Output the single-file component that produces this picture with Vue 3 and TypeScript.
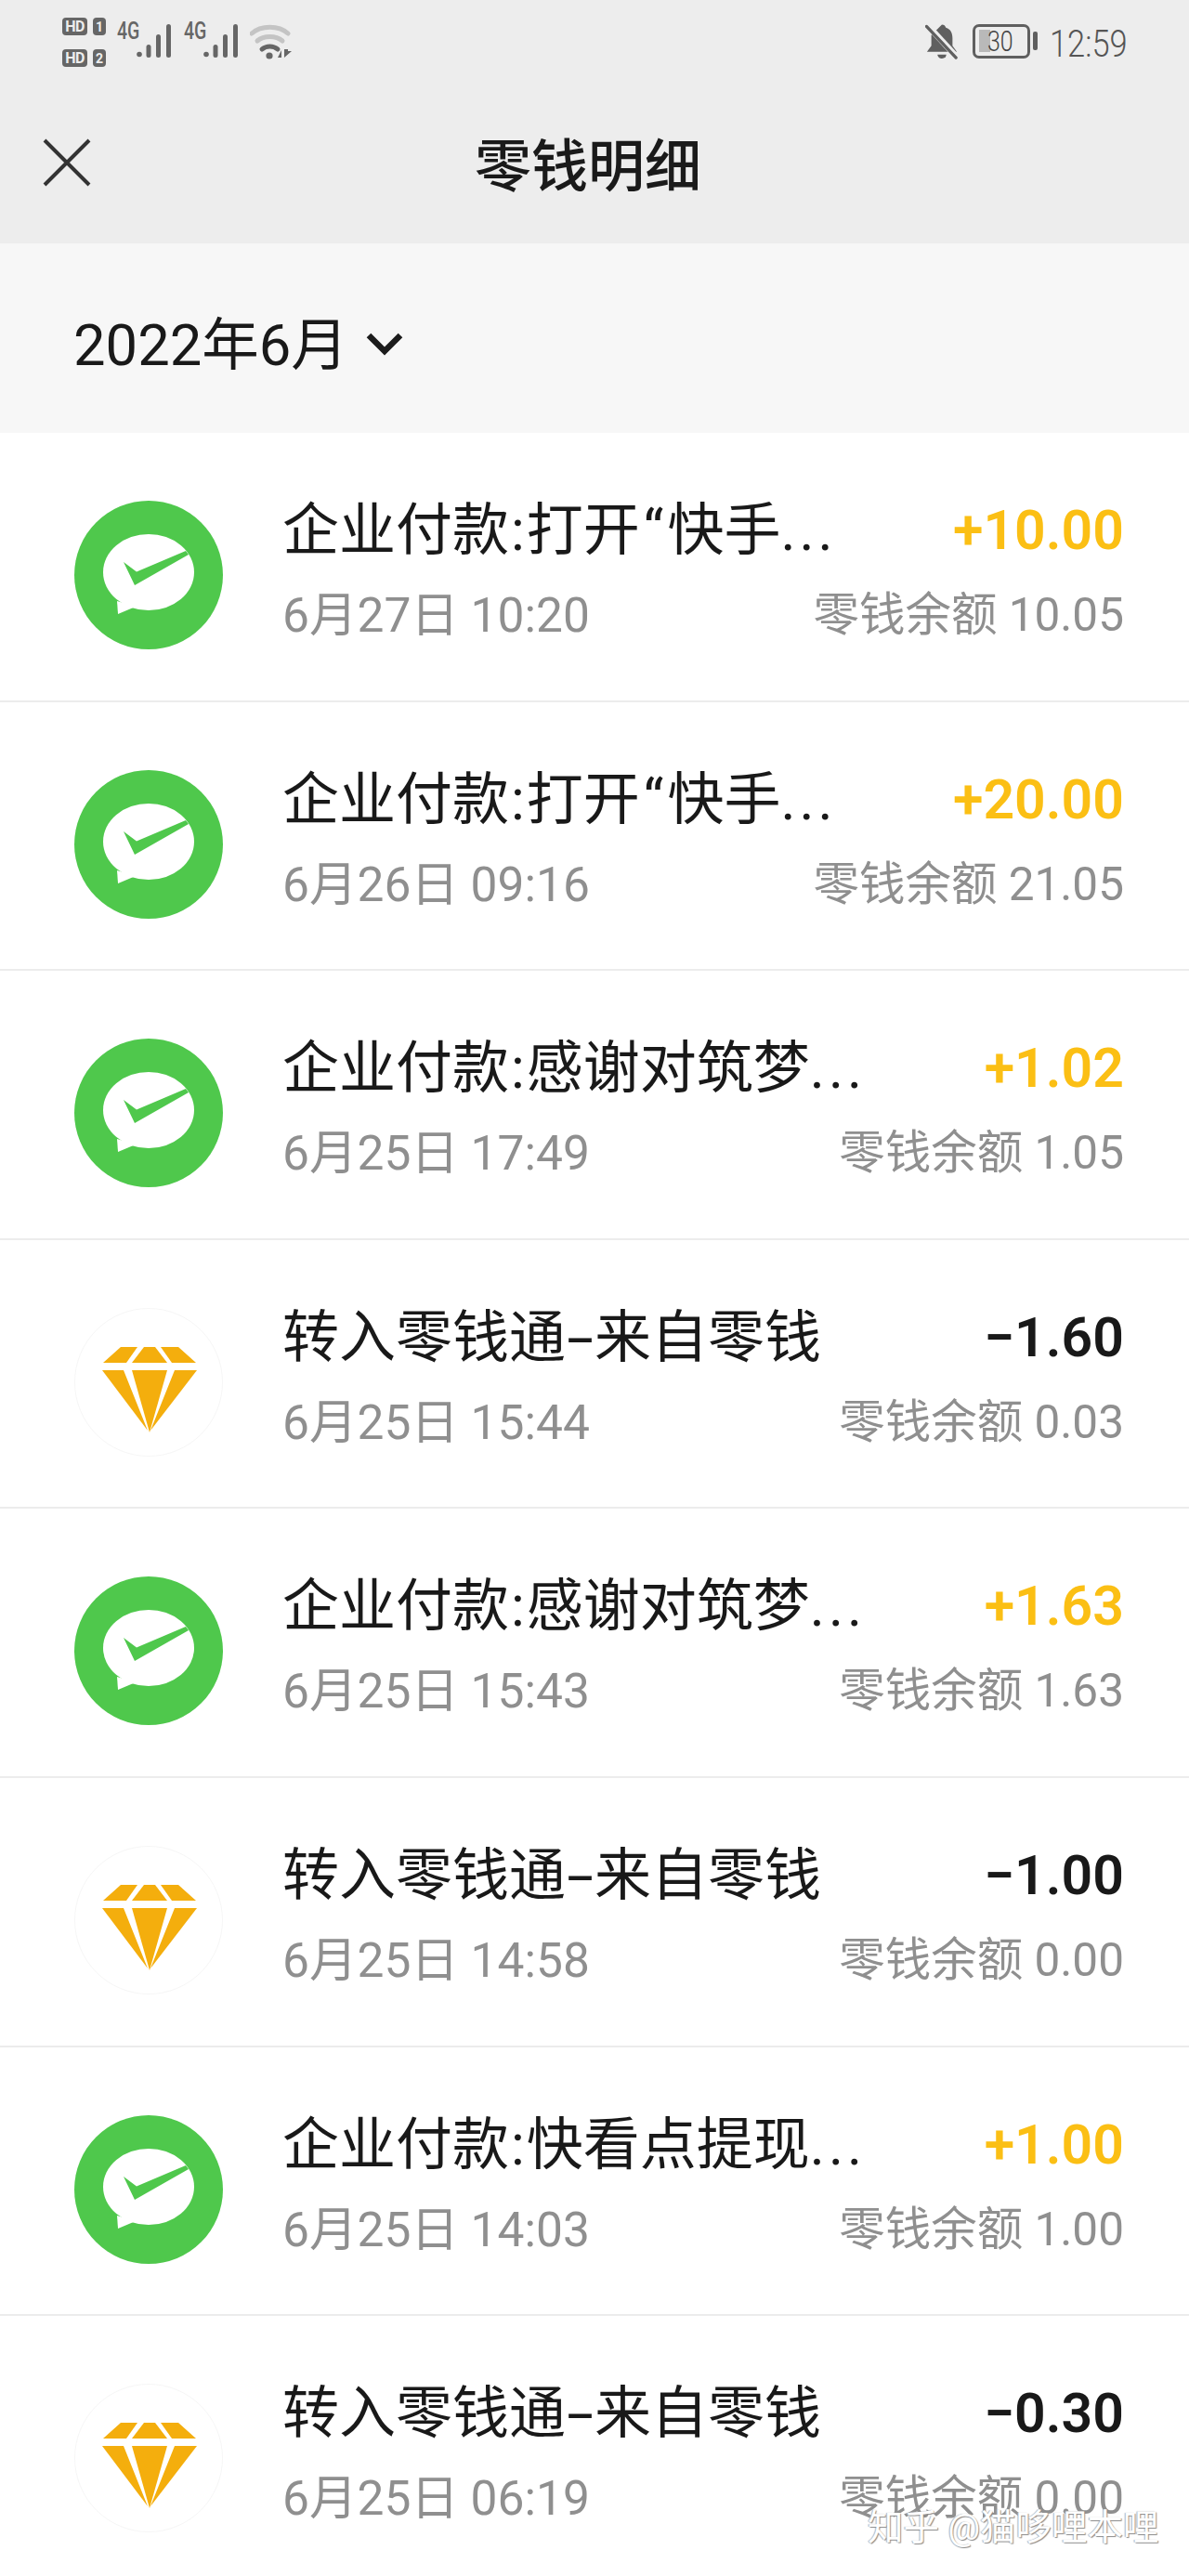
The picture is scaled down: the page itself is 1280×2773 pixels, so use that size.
<script setup lang="ts">
interface Row {
  kind: 'pay' | 'gem'
  title: string
  cut: boolean
  time: string
  amount: string
  balance: string
}

const rows: Row[] = [
  { kind: 'pay', title: '企业付款:打开“快手', cut: true, time: '6月27日 10:20', amount: '+10.00', balance: '10.05' },
  { kind: 'pay', title: '企业付款:打开“快手', cut: true, time: '6月26日 09:16', amount: '+20.00', balance: '21.05' },
  { kind: 'pay', title: '企业付款:感谢对筑梦', cut: true, time: '6月25日 17:49', amount: '+1.02', balance: '1.05' },
  { kind: 'gem', title: '转入零钱通-来自零钱', cut: false, time: '6月25日 15:44', amount: '−1.60', balance: '0.03' },
  { kind: 'pay', title: '企业付款:感谢对筑梦', cut: true, time: '6月25日 15:43', amount: '+1.63', balance: '1.63' },
  { kind: 'gem', title: '转入零钱通-来自零钱', cut: false, time: '6月25日 14:58', amount: '−1.00', balance: '0.00' },
  { kind: 'pay', title: '企业付款:快看点提现', cut: true, time: '6月25日 14:03', amount: '+1.00', balance: '1.00' },
  { kind: 'gem', title: '转入零钱通-来自零钱', cut: false, time: '6月25日 06:19', amount: '−0.30', balance: '0.00' },
]

// punctuation is wider in the phone's font, so it gets its own span
function titleParts(title: string) {
  return title.split(/([:“-])/).filter(Boolean)
}

function partClass(part: string) {
  if (part === ':') return 'colon'
  if (part === '“') return 'quote'
  if (part === '-') return 'hyphen'
  return ''
}
</script>

<template>
  <div class="page">
    <header class="top">
      <div class="status">
        <div class="status-left">
          <div class="sims">
            <div class="sim"><span class="hd">HD</span><span class="num">1</span></div>
            <div class="sim"><span class="hd">HD</span><span class="num">2</span></div>
          </div>
          <div v-for="n in 2" :key="n" class="net">
            <span class="net-label">4G</span>
            <svg class="bars" width="39" height="36" viewBox="0 0 39 36">
              <circle cx="3" cy="32.500" r="2.800" />
              <rect x="10.500" y="22" width="5" height="14" rx="2.500" />
              <rect x="21" y="11" width="5" height="25" rx="2.500" />
              <rect x="32" y="0" width="5" height="36" rx="2.500" />
            </svg>
          </div>
          <svg class="wifi" width="46" height="38" viewBox="0 0 46 38">
            <path d="M2 10C12 1 31 1 41 10" fill="none" stroke="#c4c4c4" stroke-width="5" stroke-linecap="round" />
            <path d="M8 18C15 12 28 12 35 18" fill="none" stroke="#c4c4c4" stroke-width="5" stroke-linecap="round" />
            <path d="M13 27C18 23 25 23 30 27" fill="none" stroke="#666" stroke-width="5" stroke-linecap="round" />
            <circle cx="21" cy="34" r="3.600" fill="#666" />
            <path d="M30 36L34 28V36ZM37 27V36L45 29H41V27Z" fill="#666" />
          </svg>
        </div>
        <div class="status-right">
          <svg class="bell" width="36" height="39" viewBox="0 0 38 40">
            <path d="M19 1C22 1 23 3 23.500 4.500C29 6 31 11 31 16V25L36 32H2L7 25V13Z" fill="#5f5f5f" />
            <path d="M14 35H24C24 38 21 39.500 19 39.500C17 39.500 14 38 14 35Z" fill="#5f5f5f" />
            <path d="M3 2L36 38" stroke="#ededed" stroke-width="7" />
            <path d="M1.500 3L35 38.500" stroke="#5f5f5f" stroke-width="3.500" stroke-linecap="round" />
          </svg>
          <div class="battery">
            <div class="cell">
              <div class="level"></div>
              <span class="pct">30</span>
            </div>
            <div class="tip"></div>
          </div>
          <span class="clock">12:59</span>
        </div>
      </div>
      <nav class="nav">
        <svg class="close" width="52" height="52" viewBox="0 0 52 52">
          <path d="M2 2L50 50M50 2L2 50" stroke="#333" stroke-width="4" fill="none" />
        </svg>
        <h1 class="title">零钱明细</h1>
      </nav>
    </header>

    <div class="month">
      <span class="month-text">2022年6月</span>
      <svg class="chevron" width="40" height="28" viewBox="0 0 40 28">
        <path d="M3 5L20 22L37 5" stroke="#1c1c1c" stroke-width="6.500" fill="none" />
      </svg>
    </div>

    <ul class="list">
      <li v-for="(row, i) in rows" :key="i" class="row">
        <svg v-if="row.kind === 'pay'" class="badge" width="160" height="160" viewBox="0 0 160 160">
          <circle cx="80" cy="80" r="80" fill="#4fc84c" />
          <ellipse cx="80" cy="77" rx="49" ry="41" fill="#fff" />
          <path d="M46 108L47 122L66 114Z" fill="#fff" />
          <path d="M53 66L67 76.500L120 54L123 58L65 91Z" fill="#4fc84c" />
        </svg>
        <svg v-else class="badge" width="160" height="160" viewBox="0 0 160 160">
          <circle cx="80" cy="80" r="79.500" fill="#fff" stroke="#f6f6f6" />
          <g fill="#f4ae0d">
            <path d="M50 42H68L56 59H31Z" />
            <path d="M75 42H87L100 59H62Z" />
            <path d="M93 42H112L131 59H105Z" />
            <path d="M30 67H53L79 132Z" />
            <path d="M62 67H100L81 134Z" />
            <path d="M108 67H132L82 132Z" />
          </g>
        </svg>
        <div class="body">
          <div class="line">
            <span class="name"><span v-for="(part, p) in titleParts(row.title)" :key="p" :class="partClass(part)">{{ part }}</span><span v-if="row.cut" class="dots">...</span></span>
            <span class="amount" :class="{ income: row.amount.startsWith('+') }">{{ row.amount }}</span>
          </div>
          <div class="line sub">
            <span class="time">{{ row.time }}</span>
            <span class="balance">零钱余额 {{ row.balance }}</span>
          </div>
        </div>
      </li>
    </ul>

    <div class="watermark">知乎 @猫哆哩本哩</div>
  </div>
</template>

<style scoped>
.page {
  position: relative;
  width: 1280px;
  height: 2773px;
  overflow: hidden;
  background: #fff;
  font-family: Roboto, "Noto Sans CJK SC", sans-serif;
  color: #191919;
}

.top {
  height: 262px;
  background: #ededed;
}

.status {
  height: 92px;
  padding: 19px 68px 0 67px;
  box-sizing: border-box;
  display: flex;
  justify-content: space-between;
  align-items: flex-start;
}

.status-left {
  display: flex;
  gap: 12px;
  align-items: flex-start;
}

.sims {
  display: flex;
  flex-direction: column;
  gap: 15px;
}

.sim {
  display: flex;
  gap: 6px;
  height: 19px;
}

.hd,
.num {
  display: flex;
  align-items: center;
  justify-content: center;
  background: #666;
  color: #ededed;
  border-radius: 4px;
  font-size: 16px;
  font-weight: 700;
  line-height: 1;
}

.hd {
  width: 27px;
  letter-spacing: -0.5px;
}

.num {
  width: 14px;
  font-size: 14px;
}

.net {
  display: flex;
  align-items: flex-start;
  margin-top: 3px;
  height: 45px;
  width: 60px;
}

.net-label {
  width: 21px;
  flex: none;
  font-size: 25px;
  font-weight: 500;
  color: #666;
  line-height: 24px;
  transform: scaleX(0.78);
  transform-origin: left;
}

.bars {
  flex: none;
  margin-top: 4px;
  fill: #666;
}

.wifi {
  margin-top: 7px;
  margin-left: -1px;
}

.status-right {
  display: flex;
  align-items: center;
  height: 50px;
  margin-left: auto;
}

.bell {
  margin-right: 15px;
}

.battery {
  display: flex;
  align-items: center;
  gap: 3px;
  margin-right: 13px;
}

.cell {
  position: relative;
  width: 62px;
  height: 37px;
  box-sizing: border-box;
  border: 3.5px solid #5f5f5f;
  border-radius: 7px;
  overflow: hidden;
}

.level {
  position: absolute;
  left: 3.5px;
  top: 3.5px;
  bottom: 3.5px;
  width: 12px;
  background: #b9b9b9;
}

.pct {
  position: absolute;
  left: 13px;
  top: 0;
  font-size: 32px;
  line-height: 30px;
  font-weight: 300;
  color: #444;
  transform: scaleX(0.78);
  transform-origin: left;
}

.tip {
  width: 5px;
  height: 20px;
  background: #5f5f5f;
  border-radius: 2px;
}

.clock {
  display: block;
  width: 82px;
  margin-top: 5px;
  font-size: 41px;
  font-weight: 300;
  color: #555;
  line-height: 52px;
  white-space: nowrap;
  transform: scaleX(0.84);
  transform-origin: left;
}

.nav {
  height: 170px;
  padding: 0 0 0 46px;
  display: flex;
  align-items: center;
}

.close {
  flex: none;
  margin-top: -4px;
}

.title {
  margin: 6px 0 0 413px;
  font-size: 61px;
  font-weight: 500;
  line-height: 80px;
  color: #1a1a1a;
}

.month {
  height: 204px;
  padding: 16px 0 0 79px;
  box-sizing: border-box;
  background: #f7f7f7;
  display: flex;
  align-items: center;
  gap: 19px;
}

.month-text {
  font-size: 61.5px;
  line-height: 80px;
}

.chevron {
  margin-top: -4px;
}

.list {
  margin: 0;
  padding: 0;
  list-style: none;
}

.row {
  height: 289.6px;
  box-sizing: border-box;
  border-bottom: 2px solid #ececec;
  padding: 73px 70px 0 80px;
  display: flex;
  gap: 66px;
  align-items: flex-start;
}

.badge {
  flex: none;
}

.body {
  flex: 1;
  min-width: 0;
  margin-top: -8px;
  display: flex;
  flex-direction: column;
  gap: 6.5px;
}

.line {
  display: flex;
  justify-content: space-between;
  align-items: center;
  height: 80px;
  white-space: nowrap;
}

.name {
  margin-left: -2px;
  font-size: 61px;
  line-height: 80px;
}

.colon {
  padding: 0 2px;
}

.quote {
  padding: 0 4px;
}

.hyphen {
  display: inline-block;
  width: 31px;
  text-align: center;
  transform: scaleX(1.7);
}

.dots {
  letter-spacing: 4px;
}

.amount {
  font-size: 59px;
  font-weight: 600;
  line-height: 80px;
  color: #191919;
}

.amount.income {
  color: #fbbf14;
}

.sub {
  color: #8f8f8f;
}

.time {
  font-size: 51.5px;
  margin-left: -2px;
}

.balance {
  font-size: 49.5px;
}

.watermark {
  position: absolute;
  left: 934px;
  top: 2698px;
  font-size: 38.5px;
  line-height: 46px;
  color: #fff;
  text-shadow: 1px 1px 1px #8a8a8a, -1px 0 1px #b0b0b0;
  white-space: nowrap;
}
</style>

<style>
html,
body {
  margin: 0;
  background: #fff;
}
</style>
